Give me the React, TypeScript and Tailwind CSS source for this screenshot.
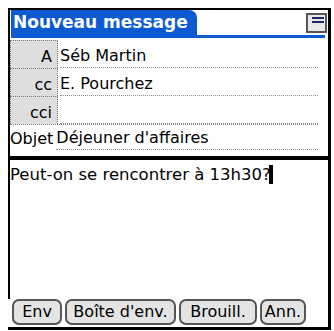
import React from "react";

const font = { fontFamily: '"DejaVu Sans", Verdana, sans-serif' };

function Row({ label, value }: { label: string; value: string }) {
  return (
    <div className="flex h-[28px]">
      <div className="w-[48px] bg-[#dedede] border-l border-t border-r border-dotted border-[#7a7a7a] flex items-end justify-end pr-[5px] pb-[2px] text-[16px] leading-[18px] text-black">
        {label}
      </div>
      <div className="flex-1 ml-[2px] mr-[10px] border-b border-dotted border-[#8a8a8a] flex items-end pb-[2px] text-[16px] leading-[18px] text-black">
        {value}
      </div>
    </div>
  );
}

export default function App() {
  return (
    <div className="w-[334px] h-[331px] bg-white pl-[8px] pt-[8px]" style={font}>
      <div className="w-[323px] h-[322px] border-t-2 border-r-[3px] border-b-[3px] border-black flex flex-col">
        <div className="flex-1 border-l-2 border-black flex flex-col">
          {/* title */}
          <div className="flex justify-between items-start h-[25px]">
            <div className="ml-[1px] h-[25px] w-[186px] bg-[#0b5ad2] rounded-tr-[8px] text-white font-bold text-[17px] leading-[25px] pl-[2px]">
              Nouveau message
            </div>
            <div className="mt-[3px] mr-[1px] w-[21px] h-[20px] border-2 border-[#555] bg-[#e8e8e8] flex flex-col items-end pt-[2px] pr-[1px] gap-[2px]">
              <div className="w-[12px] h-[2px] bg-[#1b2a66]" />
              <div className="w-[12px] h-[2px] bg-[#1b2a66]" />
            </div>
          </div>
          <div className="h-[3px] bg-[#0b5ad2] ml-[1px] mr-[3px]" />
          {/* fields */}
          <div className="mt-[2px] flex flex-col">
            <Row label="A" value="Séb Martin" />
            <Row label="cc" value="E. Pourchez" />
            <Row label="cci" value="" />
            <div className="flex h-[26px] border-t border-dotted border-[#7a7a7a] mr-[10px]">
              <div className="flex items-end pb-[2px] text-[16px] leading-[18px] text-black">Objet</div>
              <div className="flex-1 ml-[3px] border-b border-dotted border-[#8a8a8a] flex items-end pb-[2px] text-[16px] leading-[18px] text-black">
                Déjeuner d'affaires
              </div>
            </div>
          </div>
          <div className="mt-[6px] h-[4px] bg-black" />
          <div className="flex-1 pt-[5px] text-[16.5px] leading-[20px] text-black flex items-start">
            <span>Peut-on se rencontrer à 13h30?</span>
            <span className="inline-block w-[4px] h-[19px] bg-black ml-[-2px]" />
          </div>
        </div>
        <div className="h-[28px] flex items-start pl-[4px] gap-[3px] text-[16px] text-black">
          <div className="w-[50px] h-[26px] border-2 border-[#555] rounded-[7px] bg-[#e4e4e4] flex items-center justify-center leading-[18px]">Env</div>
          <div className="w-[111px] h-[26px] border-2 border-[#555] rounded-[7px] bg-[#e4e4e4] flex items-center justify-center leading-[18px]">Boîte d'env.</div>
          <div className="w-[78px] h-[26px] border-2 border-[#555] rounded-[7px] bg-[#e4e4e4] flex items-center justify-center leading-[18px]">Brouill.</div>
          <div className="w-[46px] h-[26px] border-2 border-[#555] rounded-[7px] bg-[#e4e4e4] flex items-center justify-center leading-[18px]">Ann.</div>
        </div>
      </div>
    </div>
  );
}
